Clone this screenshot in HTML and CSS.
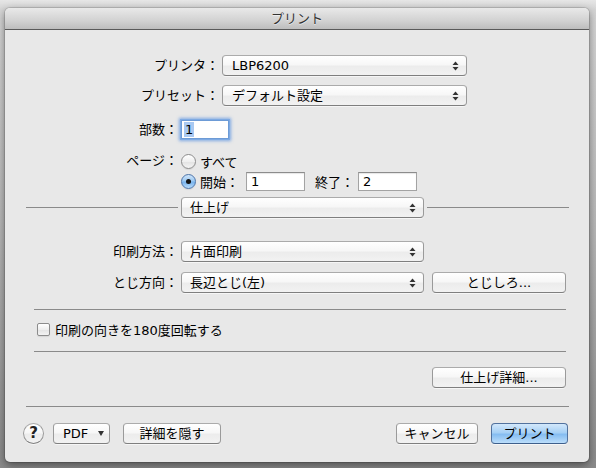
FILE: index.html
```html
<!DOCTYPE html>
<html lang="ja">
<head>
<meta charset="utf-8">
<title>プリント</title>
<link rel="stylesheet" href="styles.css">
</head>
<body>
<div class="desk">
  <div class="sheet">
    <div class="titlebar">プリント</div>
    <div class="content">
      <div class="row row-printer">
        <div class="label label-top">プリンタ：</div>
        <div class="popup popup-top"><span>LBP6200</span><svg class="arrows" width="7" height="10" viewBox="0 0 7 10"><polygon points="0.5,4 6.5,4 3.5,0.5"/><polygon points="0.5,6 6.5,6 3.5,9.5"/></svg></div>
      </div>
      <div class="row row-preset">
        <div class="label label-top">プリセット：</div>
        <div class="popup popup-top"><span>デフォルト設定</span><svg class="arrows" width="7" height="10" viewBox="0 0 7 10"><polygon points="0.5,4 6.5,4 3.5,0.5"/><polygon points="0.5,6 6.5,6 3.5,9.5"/></svg></div>
      </div>

      <div class="row row-copies">
        <div class="label label-mid">部数：</div>
        <div class="field field-copies focus"><span class="sel">1</span></div>
      </div>
      <div class="row row-pages1">
        <div class="label label-mid">ページ：</div>
        <div class="radio"></div>
        <span class="radio-text">すべて</span>
      </div>
      <div class="row row-pages2">
        <div class="label label-mid"></div>
        <div class="radio on"></div>
        <span class="radio-text">開始：</span>
        <div class="field field-range field-from">1</div>
        <span class="to-label">終了：</span>
        <div class="field field-range field-to">2</div>
      </div>

      <div class="row row-sep">
        <div class="line line-left"></div>
        <div class="popup popup-mid popup-sep"><span>仕上げ</span><svg class="arrows" width="7" height="10" viewBox="0 0 7 10"><polygon points="0.5,4 6.5,4 3.5,0.5"/><polygon points="0.5,6 6.5,6 3.5,9.5"/></svg></div>
        <div class="line line-right"></div>
      </div>

      <div class="row row-method">
        <div class="label label-mid">印刷方法：</div>
        <div class="popup popup-mid"><span>片面印刷</span><svg class="arrows" width="7" height="10" viewBox="0 0 7 10"><polygon points="0.5,4 6.5,4 3.5,0.5"/><polygon points="0.5,6 6.5,6 3.5,9.5"/></svg></div>
      </div>
      <div class="row row-bind">
        <div class="label label-mid">とじ方向：</div>
        <div class="popup popup-mid"><span>長辺とじ(左)</span><svg class="arrows" width="7" height="10" viewBox="0 0 7 10"><polygon points="0.5,4 6.5,4 3.5,0.5"/><polygon points="0.5,6 6.5,6 3.5,9.5"/></svg></div>
        <div class="button button-side">とじしろ...</div>
      </div>

      <div class="hr hr-inner hr-1"></div>

      <div class="row row-check">
        <div class="checkbox"></div>
        <span class="check-text">印刷の向きを180度回転する</span>
      </div>

      <div class="hr hr-inner hr-2"></div>

      <div class="row row-detail">
        <div class="button button-side">仕上げ詳細...</div>
      </div>

      <div class="hr hr-outer"></div>

      <div class="row row-bottom">
        <div class="help">?</div>
        <div class="button button-pdf"><span>PDF</span><span class="tri"></span></div>
        <div class="button button-hide">詳細を隠す</div>
        <div class="spacer"></div>
        <div class="button button-cancel">キャンセル</div>
        <div class="button button-print">プリント</div>
      </div>
    </div>
  </div>
</div>
</body>
</html>
```

FILE: styles.css
```css
* { box-sizing: border-box; }
html, body { margin: 0; padding: 0; }
body {
  width: 596px;
  height: 468px;
  overflow: hidden;
  background: linear-gradient(to bottom, #e6e6e6 0, #d4d4d4 10px, #b8b8b8 220px, #8a8a8a 468px);
  font-family: "DejaVu Sans", "Noto Sans CJK JP", sans-serif;
  font-size: 13px;
  color: #000;
}
.desk { padding: 8px 0 0 5px; }
.sheet {
  width: 584px;
  height: 454px;
  background: #e8e8e8;
  border-radius: 5px 5px 5px 5px;
  box-shadow: 0 3px 9px rgba(0,0,0,.45), 0 0 0 1px rgba(0,0,0,.12);
  overflow: hidden;
}
.titlebar {
  height: 22px;
  line-height: 21px;
  text-align: center;
  background: linear-gradient(#e9e9e9, #d2d2d2 60%, #bdbdbd);
  border-bottom: 1px solid #5a5a5a;
  color: #333;
  text-shadow: 0 1px 0 rgba(255,255,255,.55);
}
.content { padding-top: 25px; }

.row { display: flex; align-items: center; }
.label { flex: none; text-align: right; white-space: nowrap; line-height: 20px; }
.label-top { width: 214px; }
.label-mid { width: 173px; }

.arrows { flex: none; fill: #333; }

.popup, .button, .help {
  border: 1px solid #9a9a9a;
  border-top-color: #ababab;
  border-bottom-color: #7f7f7f;
  background: linear-gradient(#ffffff, #f7f7f7 45%, #ececec 55%, #f2f2f2);
  box-shadow: 0 1px 0 rgba(255,255,255,.6);
}
.popup {
  flex: none;
  height: 21px;
  border-radius: 4px;
  display: flex;
  align-items: center;
  justify-content: space-between;
  padding: 0 7px 0 9px;
  margin-left: 3px;
  line-height: 19px;
  white-space: nowrap;
}
.popup-top { width: 245px; }
.popup-mid { width: 243px; padding-left: 8px; }

.button {
  flex: none;
  height: 21px;
  border-radius: 4px;
  text-align: center;
  line-height: 19px;
  white-space: nowrap;
}

.row-printer { height: 21px; }
.row-preset { height: 21px; margin-top: 9px; }

.row-copies { height: 21px; margin-top: 13px; }
.field {
  flex: none;
  height: 19px;
  background: #fff;
  border: 1px solid #a3a3a3;
  border-top-color: #8c8c8c;
  box-shadow: inset 0 1px 1px rgba(0,0,0,.10);
  padding-left: 4px;
  line-height: 17px;
}
.field-copies { width: 48px; margin-left: 3px; padding-left: 2px; }
.focus {
  border-color: #6d9bd6;
  box-shadow: 0 0 0 1px #7eaae3, 0 0 3px 2px rgba(95,150,225,.75);
}
.sel { background: #a9c9f2; padding: 0 1px; display: inline-block; line-height: 15px; margin-top: 1px; }

.row-pages1 { height: 20px; margin-top: 11px; }
.row-pages2 { height: 20px; }
.radio {
  flex: none;
  width: 15px;
  height: 15px;
  margin-left: 3px;
  border-radius: 50%;
  border: 1px solid #8c8c8c;
  background: linear-gradient(#ffffff, #efefef 50%, #e2e2e2 51%, #f4f4f4);
  box-shadow: 0 1px 1px rgba(0,0,0,.08);
  position: relative;
}
.radio.on {
  border-color: #4d74a9;
  background: linear-gradient(#cfe5fa, #9ac8f2 48%, #76b1ec 52%, #b8dcfb);
}
.radio.on::after {
  content: "";
  position: absolute;
  left: 4px;
  top: 4px;
  width: 5px;
  height: 5px;
  border-radius: 50%;
  background: #141414;
}
.radio-text { margin-left: 4px; white-space: nowrap; }
.field-range { width: 59px; margin-left: 7px; }
.to-label { margin-left: 10px; white-space: nowrap; }
.field-to { margin-left: 4px; }

.row-sep { height: 21px; margin-top: 6px; }
.line { flex: none; height: 1px; background: #8a8a8a; }
.line-left { width: 152px; margin-left: 21px; }
.popup-sep { margin-left: 3px; margin-right: 3px; }
.line-right { width: 142px; }

.row-method { height: 21px; margin-top: 23px; }
.row-bind { height: 21px; margin-top: 10px; }
.button-side { width: 134px; margin-left: 8px; }

.hr { height: 1px; background: #8a8a8a; }
.hr-inner { margin-left: 29px; width: 532px; }
.hr-1 { margin-top: 16px; }
.row-check { height: 16px; margin-top: 11px; padding-left: 32px; }
.checkbox {
  flex: none;
  width: 13px;
  height: 13px;
  border-radius: 2px;
  border: 1px solid #8c8c8c;
  background: linear-gradient(#ffffff, #efefef 50%, #e3e3e3 51%, #f3f3f3);
  box-shadow: 0 1px 1px rgba(0,0,0,.08);
}
.check-text { margin-left: 5px; white-space: nowrap; }
.hr-2 { margin-top: 14px; }

.row-detail { height: 21px; margin-top: 15px; justify-content: flex-end; padding-right: 23px; }

.hr-outer { margin-top: 18px; margin-left: 21px; width: 543px; }

.row-bottom { height: 22px; margin-top: 15px; padding-left: 18px; padding-right: 21px; }
.help {
  flex: none;
  width: 21px;
  height: 21px;
  border-radius: 50%;
  text-align: center;
  line-height: 19px;
  font-weight: bold;
  font-size: 15px;
  color: #222;
}
.button-pdf {
  width: 57px;
  margin-left: 9px;
  display: flex;
  align-items: center;
  padding-left: 9px;
}
.tri {
  width: 0;
  height: 0;
  border-left: 3.5px solid transparent;
  border-right: 3.5px solid transparent;
  border-top: 5px solid #333;
  margin-left: 10px;
}
.button-hide { width: 98px; margin-left: 13px; }
.spacer { flex: 1; }
.button-cancel { width: 82px; }
.button-print {
  width: 77px;
  margin-left: 13px;
  border-color: #52729e;
  border-bottom-color: #3e5f8c;
  background: linear-gradient(#d3e8fb, #a6d0f5 45%, #86bdf1 55%, #bcdefb);
}
```
